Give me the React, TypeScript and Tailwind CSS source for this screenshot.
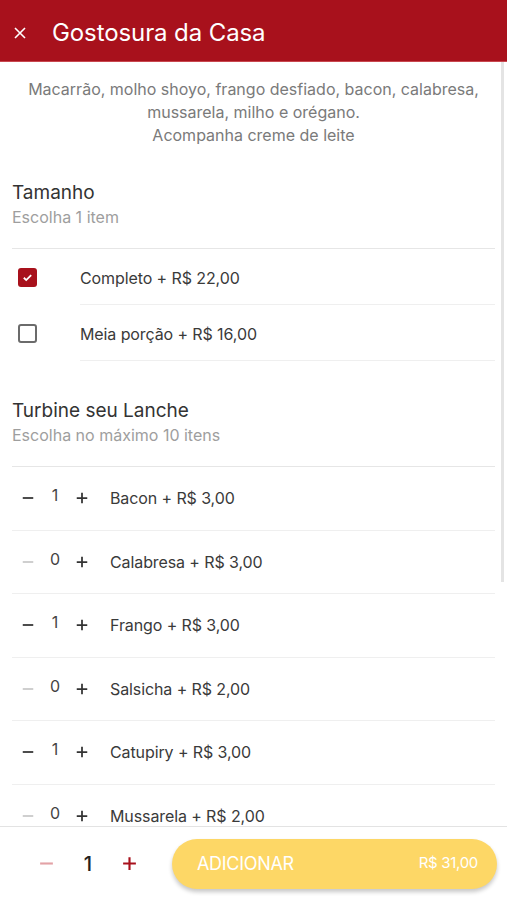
import React from "react";

const Minus = ({ className }: { className?: string }) => (
  <svg viewBox="0 0 16 16" className={className} fill="none" stroke="currentColor" strokeWidth="2">
    <path d="M2 8h12" />
  </svg>
);
const Plus = ({ className }: { className?: string }) => (
  <svg viewBox="0 0 16 16" className={className} fill="none" stroke="currentColor" strokeWidth="2">
    <path d="M2 8h12M8 2v12" />
  </svg>
);

const extras = [
  { name: "Bacon + R$ 3,00", q: 1 },
  { name: "Calabresa + R$ 3,00", q: 0 },
  { name: "Frango + R$ 3,00", q: 1 },
  { name: "Salsicha + R$ 2,00", q: 0 },
  { name: "Catupiry + R$ 3,00", q: 1 },
  { name: "Mussarela + R$ 2,00", q: 0 },
];

export default function App() {
  return (
    <div className="h-[900px] w-[507px] flex flex-col bg-white overflow-hidden font-['Inter',sans-serif] text-[#3a3a3a]">
      <header className="h-[62px] shrink-0 bg-[#a8111c] flex items-center pt-[4px] border-b border-[#c9474f]">
        <div className="w-[52px] flex justify-center pr-[12px]">
          <svg viewBox="0 0 12 12" className="w-[12px] h-[12px] text-white" fill="none" stroke="currentColor" strokeWidth="1.6">
            <path d="M1 1l10 10M11 1L1 11" />
          </svg>
        </div>
        <h1 className="text-white text-[24px] font-normal tracking-[-0.1px]">Gostosura da Casa</h1>
      </header>

      <main className="flex-1 overflow-hidden relative">
        <div className="absolute right-[3px] top-0 w-[3px] h-[520px] bg-[#e4e4e4]" />
        <p className="text-center text-[#7a7a7a] text-[16px] leading-[23px] pt-[16px] px-[14px]">
          Macarrão, molho shoyo, frango desfiado, bacon, calabresa,
          <br />
          mussarela, milho e orégano.
          <br />
          Acompanha creme de leite
        </p>

        <section className="px-[12px] mt-[33px]">
          <h2 className="text-[19px] leading-[26px] text-[#333]">Tamanho</h2>
          <p className="text-[16px] leading-[22px] text-[#9e9e9e]">Escolha 1 item</p>
          <div className="mt-[20px] border-t border-[#e6e6e6] w-[483px]">
            <div className="flex items-center h-[56px]">
              <div className="w-[68px] pl-[6px]">
                <div className="w-[19px] h-[19px] rounded-[3px] bg-[#a8111c] flex items-center justify-center mt-[1px]">
                  <svg viewBox="0 0 12 12" className="w-[11px] h-[11px]" fill="none" stroke="white" strokeWidth="2">
                    <path d="M2 6.3l2.6 2.5L10 3.3" />
                  </svg>
                </div>
              </div>
              <div className="flex-1 h-full flex items-center pt-[2px] border-b border-[#efefef] text-[16px] tracking-[-0.1px]">Completo + R$ 22,00</div>
            </div>
            <div className="flex items-center h-[56px]">
              <div className="w-[68px] pl-[6px]">
                <div className="w-[19px] h-[19px] rounded-[3px] border-[2px] border-[#6b6b6b]" />
              </div>
              <div className="flex-1 h-full flex items-center pt-[2px] border-b border-[#efefef] text-[16px] tracking-[-0.1px]">Meia porção + R$ 16,00</div>
            </div>
          </div>
        </section>

        <section className="px-[12px] mt-[37px]">
          <h2 className="text-[19px] leading-[26px] text-[#333]">Turbine seu Lanche</h2>
          <p className="text-[16px] leading-[22px] text-[#9e9e9e]">Escolha no máximo 10 itens</p>
          <div className="mt-[20px] w-[483px]">
            {extras.map((e, i) => (
              <div key={i} className="flex items-center h-[63.5px] border-t border-[#efefef] first:border-[#e6e6e6]">
                <div className="w-[98px] flex items-center pl-[9px]">
                  <Minus className={"w-[14px] h-[14px] " + (e.q ? "text-[#333]" : "text-[#c8c8c8]")} />
                  <span className="w-[40px] text-center text-[16px] -mt-[6px] text-[#444]">{e.q}</span>
                  <Plus className="w-[14px] h-[14px] text-[#333]" />
                </div>
                <span className="text-[16px] tracking-[-0.1px] text-[#3a3a3a]">{e.name}</span>
              </div>
            ))}
          </div>
        </section>
      </main>

      <footer className="h-[74px] shrink-0 border-t border-[#e3e3e3] flex items-center px-[10px]">
        <div className="flex items-center w-[162px] pl-[28px]">
          <Minus className="w-[17px] h-[17px] text-[#e3a2a6]" />
          <span className="w-[66px] text-center text-[20px] text-[#222] font-medium">1</span>
          <Plus className="w-[17px] h-[17px] text-[#a8111c]" />
        </div>
        <button className="flex-1 h-[50px] rounded-full bg-[#fdd766] shadow-[0_3px_4px_rgba(0,0,0,0.22)] flex items-center justify-between pl-[25px] pr-[19px] text-white">
          <span className="text-[18px] tracking-[-0.3px]">ADICIONAR</span>
          <span className="text-[15px] tracking-[-0.3px]">R$ 31,00</span>
        </button>
      </footer>
    </div>
  );
}
